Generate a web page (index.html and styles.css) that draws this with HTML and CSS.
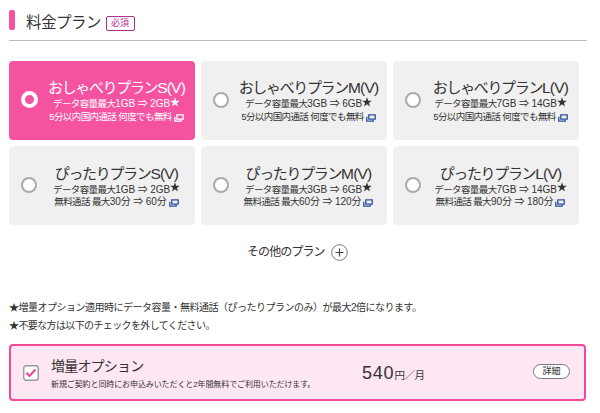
FILE: index.html
```html
<!DOCTYPE html>
<html lang="ja">
<head>
    <meta charset="UTF-8">
    <title>料金プラン</title>
    <link rel="stylesheet" href="styles.css">
</head>
<body>
    <svg class="sprite">
        <symbol id="window" viewBox="0 0 10 8">
            <path d="M2.8 .8h6.4v4.4H2.8z" fill="none" stroke="currentColor" stroke-width="1.3"/>
            <path d="M.8 2.7v4.5h6.4V5.5" fill="none" stroke="currentColor" stroke-width="1.3"/>
        </symbol>
        <symbol id="star" viewBox="0 0 10 10">
            <path d="M5 .2l1.2 3.5h3.6L6.9 5.9 8 9.5 5 7.3 2 9.5l1.1-3.6L.2 3.7h3.6z" fill="currentColor"/>
        </symbol>
    </svg>

    <header class="heading">
        <h1>料金プラン</h1>
        <span class="required">必須</span>
    </header>

    <div class="plans">
        <div class="plan selected">
            <span class="radio"></span>
            <div class="plan-text">
                <div class="name">おしゃべりプラン<span class="type">S(V)</span></div>
                <div class="data">データ容量最大<span class="num">1GB ⇒ 2GB</span><svg class="star"><use href="#star"/></svg></div>
                <div class="call">5分以内国内通話 何度でも無料<svg class="window"><use href="#window"/></svg></div>
            </div>
        </div>
        <div class="plan">
            <span class="radio"></span>
            <div class="plan-text">
                <div class="name">おしゃべりプラン<span class="type">M(V)</span></div>
                <div class="data">データ容量最大<span class="num">3GB ⇒ 6GB</span><svg class="star"><use href="#star"/></svg></div>
                <div class="call">5分以内国内通話 何度でも無料<svg class="window"><use href="#window"/></svg></div>
            </div>
        </div>
        <div class="plan">
            <span class="radio"></span>
            <div class="plan-text">
                <div class="name">おしゃべりプラン<span class="type">L(V)</span></div>
                <div class="data">データ容量最大<span class="num">7GB ⇒ 14GB</span><svg class="star"><use href="#star"/></svg></div>
                <div class="call">5分以内国内通話 何度でも無料<svg class="window"><use href="#window"/></svg></div>
            </div>
        </div>
        <div class="plan">
            <span class="radio"></span>
            <div class="plan-text">
                <div class="name">ぴったりプラン<span class="type">S(V)</span></div>
                <div class="data">データ容量最大<span class="num">1GB ⇒ 2GB</span><svg class="star"><use href="#star"/></svg></div>
                <div class="call">無料通話 最大<span class="num">30分 ⇒ 60分</span><svg class="window"><use href="#window"/></svg></div>
            </div>
        </div>
        <div class="plan">
            <span class="radio"></span>
            <div class="plan-text">
                <div class="name">ぴったりプラン<span class="type">M(V)</span></div>
                <div class="data">データ容量最大<span class="num">3GB ⇒ 6GB</span><svg class="star"><use href="#star"/></svg></div>
                <div class="call">無料通話 最大<span class="num">60分 ⇒ 120分</span><svg class="window"><use href="#window"/></svg></div>
            </div>
        </div>
        <div class="plan">
            <span class="radio"></span>
            <div class="plan-text">
                <div class="name">ぴったりプラン<span class="type">L(V)</span></div>
                <div class="data">データ容量最大<span class="num">7GB ⇒ 14GB</span><svg class="star"><use href="#star"/></svg></div>
                <div class="call">無料通話 最大<span class="num">90分 ⇒ 180分</span><svg class="window"><use href="#window"/></svg></div>
            </div>
        </div>
    </div>

    <div class="more">
        <span>その他のプラン</span>
        <svg class="plus" viewBox="0 0 17 17">
            <circle cx="8.5" cy="8.5" r="7.8" fill="#fff" stroke="#777" stroke-width="1"/>
            <path d="M8.5 4.5v8M4.5 8.5h8" stroke="#444" stroke-width="1.2"/>
        </svg>
    </div>

    <div class="notes">
        <p class="note-data">★増量オプション適用時にデータ容量・無料通話（ぴったりプランのみ）が最大2倍になります。</p>
        <p class="note-check">★不要な方は以下のチェックを外してください。</p>
    </div>

    <div class="option">
        <svg class="check" viewBox="0 0 16 16">
            <rect x=".75" y=".75" width="14.5" height="14.5" rx="2.5" fill="#fff" stroke="#999" stroke-width="1.4"/>
            <path d="M3.3 7.8l3.2 3.2 6-6.4" fill="none" stroke="#ee4a9b" stroke-width="2.2"/>
        </svg>
        <div class="option-text">
            <div class="option-name">増量オプション</div>
            <div class="option-desc">新規ご契約と同時にお申込みいただくと2年間無料でご利用いただけます。</div>
        </div>
        <div class="price"><span class="amount">540</span>円／月</div>
        <a class="detail">詳細</a>
    </div>
</body>
</html>
```
FILE: styles.css
```css
* {
    box-sizing: border-box;
}
body {
    margin: 0;
    padding: 10px 0 0 9px;
    width: 600px;
    height: 413px;
    overflow: hidden;
    background: #fff;
    color: #333;
    font-family: "Liberation Sans", "Noto Sans CJK JP", sans-serif;
    white-space: nowrap;
}
.sprite {
    display: none;
}
.heading {
    display: flex;
    align-items: center;
    width: 578px;
    height: 31px;
    padding-bottom: 6px;
    border-bottom: 1px solid #bbb;
}
.heading::before {
    content: "";
    width: 6px;
    height: 20px;
    margin: -4px 11px 0 0;
    border-radius: 2px;
    background: #f552a2;
}
h1 {
    margin: 2px 0 0;
    font-size: 15.5px;
    line-height: 24px;
    font-weight: 400;
    letter-spacing: -0.5px;
}
.required {
    width: 29px;
    height: 15px;
    margin: 2px 0 0 4.5px;
    border: 1px solid #b0308a;
    border-radius: 2px;
    color: #b0308a;
    font-size: 9px;
    line-height: 13px;
    text-align: center;
}
.plans {
    display: grid;
    grid-template-columns: repeat(3, 186px);
    grid-auto-rows: 79px;
    gap: 6.5px 6px;
    margin-top: 19.5px;
}
.plan {
    display: flex;
    align-items: center;
    padding-left: 12px;
    border-radius: 4px;
    background: #f0f0f0;
}
.radio {
    flex: none;
    width: 16px;
    height: 16px;
    margin-top: -1px;
    border: 2px solid #aaa;
    border-radius: 50%;
    background: #fff;
}
.plan-text {
    width: 136px;
    margin: 1px 0 0 11.5px;
    display: flex;
    flex-direction: column;
    align-items: center;
}
.name {
    font-size: 15px;
    line-height: 20px;
    letter-spacing: -1.35px;
}
.type {
    font-size: 15.5px;
    letter-spacing: -0.8px;
}
.data, .call {
    display: flex;
    align-items: center;
    font-size: 9.5px;
    line-height: 12.5px;
    letter-spacing: -0.6px;
    white-space: pre;
}
.num {
    font-size: 10px;
    letter-spacing: -0.1px;
}
.star {
    width: 10px;
    height: 10px;
    margin-top: -5px;
}
.window {
    width: 10px;
    height: 8px;
    margin: 2px 0 0 2px;
    color: #2d4f9e;
}
.selected {
    background: #f552a2;
    color: #fff;
}
.selected .radio {
    width: 17px;
    height: 17px;
    margin-right: -1px;
    border: 4px solid #fff;
    background: transparent;
}
.selected .window {
    color: #fff;
}
.more {
    display: flex;
    align-items: center;
    margin: 18px 0 0 238px;
    font-size: 12px;
    line-height: 18px;
    letter-spacing: -0.9px;
}
.plus {
    width: 17px;
    height: 17px;
    margin: 1px 0 0 6.5px;
}
.notes {
    margin-top: 38px;
    font-size: 10px;
    line-height: 18px;
}
.notes p {
    margin: 0;
}
.note-data {
    letter-spacing: -0.5px;
}
.note-check {
    letter-spacing: -0.62px;
}
.option {
    display: flex;
    align-items: center;
    width: 577px;
    height: 57px;
    margin-top: 8.5px;
    padding-left: 12px;
    border: 2px solid #f04a98;
    border-radius: 4px;
    background: #fee6f3;
}
.check {
    flex: none;
    width: 16px;
    height: 16px;
    margin-top: 1px;
}
.option-text {
    width: 311px;
    margin: 4px 0 0 12px;
}
.option-name {
    font-size: 14px;
    line-height: 21px;
    letter-spacing: -0.8px;
}
.option-desc {
    font-size: 8px;
    line-height: 16px;
    letter-spacing: -0.1px;
}
.price {
    width: 171px;
    margin-top: 2px;
    font-size: 10.5px;
    letter-spacing: -0.5px;
}
.amount {
    font-size: 18px;
    letter-spacing: 0.8px;
}
.detail {
    width: 37px;
    height: 15px;
    margin-top: -2px;
    border: 1px solid #777;
    border-radius: 8px;
    background: #fff;
    font-size: 9px;
    line-height: 13px;
    text-align: center;
}
```
